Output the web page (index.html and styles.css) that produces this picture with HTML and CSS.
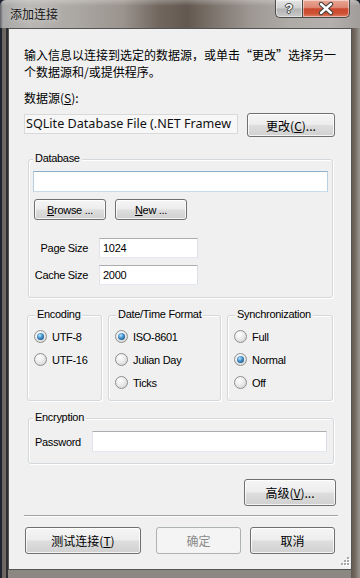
FILE: index.html
```html
<!DOCTYPE html>
<html>
<head>
<meta charset="utf-8">
<link rel="stylesheet" href="styles.css">
</head>
<body>
<div class="window">
  <div class="titlebar">
    <span class="title">添加连接</span>
    <div class="caption">
      <span class="cap-btn help">?</span>
      <span class="cap-btn close">
        <svg width="46" height="17" viewBox="0 0 46 17">
          <path d="M18 4 L28 13 M28 4 L18 13" stroke="#3b3b3b" stroke-width="4.4" stroke-linecap="round" fill="none"/>
          <path d="M18 4 L28 13 M28 4 L18 13" stroke="#ffffff" stroke-width="2.4" stroke-linecap="round" fill="none"/>
        </svg>
      </span>
    </div>
  </div>
  <div class="frame-body">
    <div class="client">
      <p class="intro">输入信息以连接到选定的数据源，或单击“更改”选择另一<br>个数据源和/或提供程序。</p>
      <div class="ds-label">数据源(<u>S</u>):</div>
      <div class="ds-row">
        <div class="ds-box">SQLite Database File (.NET Framework Data Provider for SQLite)</div>
        <button class="btn btn-change"><span>更改(<u>C</u>)...</span></button>
      </div>

      <div class="panel">
        <div class="group db-group">
          <span class="group-title">Database</span>
          <div class="text db-path"></div>
          <div class="btn-row">
            <button class="btn btn-sm btn-browse"><span><u>B</u>rowse ...</span></button>
            <button class="btn btn-sm btn-new"><span><u>N</u>ew ...</span></button>
          </div>
          <div class="field-row first">
            <span class="field-label">Page Size</span>
            <div class="text field-input">1024</div>
          </div>
          <div class="field-row">
            <span class="field-label">Cache Size</span>
            <div class="text field-input">2000</div>
          </div>
        </div>

        <div class="group-row">
          <div class="group radio-group">
            <span class="group-title">Encoding</span>
            <div class="radio-list">
              <div class="radio-item"><span class="radio on"></span>UTF-8</div>
              <div class="radio-item"><span class="radio"></span>UTF-16</div>
            </div>
          </div>
          <div class="group radio-group">
            <span class="group-title">Date/Time Format</span>
            <div class="radio-list">
              <div class="radio-item"><span class="radio on"></span>ISO-8601</div>
              <div class="radio-item"><span class="radio"></span>Julian Day</div>
              <div class="radio-item"><span class="radio"></span>Ticks</div>
            </div>
          </div>
          <div class="group radio-group">
            <span class="group-title">Synchronization</span>
            <div class="radio-list">
              <div class="radio-item"><span class="radio"></span>Full</div>
              <div class="radio-item"><span class="radio on"></span>Normal</div>
              <div class="radio-item"><span class="radio"></span>Off</div>
            </div>
          </div>
        </div>

        <div class="group enc-group">
          <span class="group-title">Encryption</span>
          <div class="pw-row">
            <span class="pw-label">Password</span>
            <div class="text pw-input"></div>
          </div>
        </div>
      </div>

      <div class="adv-row">
        <button class="btn btn-adv"><span>高级(<u>V</u>)...</span></button>
      </div>
      <div class="sep"></div>
      <div class="footer">
        <button class="btn btn-test"><span>测试连接(<u>T</u>)</span></button>
        <button class="btn btn-ok" disabled><span>确定</span></button>
        <button class="btn btn-cancel"><span>取消</span></button>
      </div>

      <svg class="grip" width="11" height="11" viewBox="0 0 11 11">
        <g fill="#ffffff">
          <rect x="9" y="1" width="2" height="2"/>
          <rect x="6" y="4" width="2" height="2"/><rect x="9" y="4" width="2" height="2"/>
          <rect x="3" y="7" width="2" height="2"/><rect x="6" y="7" width="2" height="2"/><rect x="9" y="7" width="2" height="2"/>
        </g>
        <g fill="#a9a9a9">
          <rect x="8" y="0" width="2" height="2"/>
          <rect x="5" y="3" width="2" height="2"/><rect x="8" y="3" width="2" height="2"/>
          <rect x="2" y="6" width="2" height="2"/><rect x="5" y="6" width="2" height="2"/><rect x="8" y="6" width="2" height="2"/>
        </g>
      </svg>
    </div>
  </div>
</div>
</body>
</html>
```
FILE: styles.css
```css
html, body {
  margin: 0;
  padding: 0;
}
body {
  width: 360px;
  height: 578px;
  overflow: hidden;
  background: #1e2531;
  font-family: "Noto Sans CJK SC", "Noto Sans", sans-serif;
}
.window {
  width: 360px;
  height: 578px;
  display: flex;
  flex-direction: column;
  background: linear-gradient(90deg,
    #1e2531 0, #1e2531 2px,
    #6a6460 2px, #716a65 6px,
    #2b2d31 6px, #2b2d31 8px,
    #8b8783 8px, #8b8783 351px,
    #5f564f 351px, #74695f 355px, #9a9793 360px);
  border-radius: 6px 6px 0 0;
  overflow: hidden;
}
.titlebar {
  position: relative;
  height: 28px;
  flex: none;
  display: flex;
  align-items: center;
  padding-left: 10px;
  font-size: 12px;
  color: #161616;
  background:
    linear-gradient(180deg, rgba(255,255,255,0.25) 0, rgba(255,255,255,0) 6px),
    linear-gradient(90deg,
      #5d6066 0, #a7a7a7 3px, #b9b7b4 8%, #aaa6a2 22%, #9b948e 34%,
      #71675f 44%, #62584f 52%, #7f766f 60%, #9f9994 70%,
      #aeaaa6 80%, #b4b0ad 92%, #a19d9a 100%);
}
.title {
  line-height: 28px;
  text-shadow: 0 0 6px rgba(255,255,255,0.6);
}
.caption {
  position: absolute;
  top: 0;
  right: 10px;
  display: flex;
}
.cap-btn {
  box-sizing: border-box;
  height: 18px;
  display: flex;
  align-items: center;
  justify-content: center;
  border: 1px solid #4b4b4b;
  border-top: none;
  box-shadow: inset 0 0 0 1px rgba(255,255,255,0.45);
}
.help {
  width: 27px;
  border-right: none;
  border-radius: 0 0 0 5px;
  background: linear-gradient(180deg, #e6e6e6 0%, #cfcfcf 48%, #b3b3b3 52%, #c9c9c9 100%);
  font: bold 13px "Liberation Sans", Arial, sans-serif;
  color: #ffffff;
  text-shadow: 0 0 1px #333, 0 0 1px #333, 1px 0 0 #555, -1px 0 0 #555, 0 1px 0 #555, 0 -1px 0 #555;
}
.close {
  width: 48px;
  border-radius: 0 0 5px 0;
  background: linear-gradient(180deg, #eaa896 0%, #dc8672 45%, #c9472d 52%, #cf5237 80%, #de8265 100%);
}
.frame-body {
  flex: 1;
  display: flex;
  padding: 0 9px 8px 8px;
}
.client {
  flex: 1;
  position: relative;
  border: 1px solid #545454;
  background: #f0f0f0;
  padding: 17px 15px 0 15px;
  display: flex;
  flex-direction: column;
  font-size: 12px;
  color: #000;
}
.intro {
  margin: 0;
  line-height: 17px;
  white-space: nowrap;
  font-family: "Noto Sans CJK SC", sans-serif;
}
.ds-label {
  margin-top: 9px;
  line-height: 17px;
}
.ds-row {
  margin-top: 7px;
  height: 24px;
  display: flex;
  align-items: flex-start;
}
.ds-box {
  box-sizing: border-box;
  width: 214px;
  height: 20px;
  margin-top: 1px;
  border: 1px solid #d9d9d9;
  background: #f7f7f7;
  font-family: "Noto Sans", sans-serif;
  font-size: 12.6px;
  line-height: 18px;
  padding-left: 1px;
  word-break: break-all;
  overflow: hidden;
  color: #111;
}
.btn {
  box-sizing: border-box;
  border: 1px solid #707070;
  border-radius: 3px;
  background: linear-gradient(180deg, #f6f6f6 0%, #ececec 48%, #dedede 52%, #d0d0d0 100%);
  box-shadow: inset 0 0 0 1px rgba(255,255,255,0.75);
  padding: 0;
  margin: 0;
  font-family: "Noto Sans CJK SC", "Noto Sans", sans-serif;
  font-size: 12px;
  color: #000;
  display: flex;
  align-items: center;
  justify-content: center;
  white-space: nowrap;
}
.btn-change {
  margin-left: 9px;
  width: 88px;
  height: 24px;
}
.panel {
  display: flex;
  flex-direction: column;
  font-family: "Liberation Sans", Arial, sans-serif;
  font-size: 11px;
  letter-spacing: -0.3px;
}
.group {
  border: 1px solid #d3d8dc;
  border-radius: 3px;
  box-shadow: inset 1px 1px 0 #ffffff, 1px 1px 0 #ffffff;
  display: flex;
  flex-direction: column;
}
.group-title {
  align-self: flex-start;
  margin-top: -9px;
  height: 15px;
  line-height: 15px;
  padding: 0 2px;
  background: #f0f0f0;
}
.db-group {
  margin: 22px 3px 0 4px;
  padding: 0 4px 12px 4px;
}
.text {
  box-sizing: border-box;
  border: 1px solid;
  border-color: #abadb3 #dbdfe6 #e3e9ef #e2e3ea;
  background: #ffffff;
}
.db-path {
  height: 21px;
  margin-top: 5px;
  border-color: #8fb0cb #b7cfe2 #c8dbea #b7cfe2;
}
.btn-row {
  display: flex;
  margin-top: 7px;
}
.btn-sm {
  width: 72px;
  height: 21px;
  font-family: "Liberation Sans", Arial, sans-serif;
  font-size: 11px;
  letter-spacing: -0.3px;
}
.btn-browse { margin-left: 1px; }
.btn-new { margin-left: 9px; }
.field-row {
  display: flex;
  align-items: center;
  margin-top: 7px;
}
.field-row.first { margin-top: 18px; }
.field-label {
  width: 55px;
  text-align: right;
  margin-right: 11px;
}
.field-input {
  width: 99px;
  height: 20px;
  line-height: 18px;
  padding-left: 3px;
}
.group-row {
  display: grid;
  grid-template-columns: 75px 113px 1fr;
  column-gap: 6px;
  margin: 17px 3px 0 3px;
  height: 86px;
}
.radio-group {
  padding-left: 6px;
}
.radio-group .group-title {
  margin-left: 1px;
}
.radio-list {
  margin-top: 3px;
}
.radio-item {
  height: 23px;
  display: flex;
  align-items: center;
}
.radio {
  flex: none;
  box-sizing: border-box;
  width: 13px;
  height: 13px;
  margin-right: 5px;
  border-radius: 50%;
  border: 1px solid #8e8f8f;
  background: radial-gradient(circle at 38% 32%, #ffffff 0%, #ebebeb 45%, #cdcdcd 100%);
  display: flex;
  align-items: center;
  justify-content: center;
}
.radio.on::after {
  content: "";
  width: 7px;
  height: 7px;
  border-radius: 50%;
  background: radial-gradient(circle at 40% 35%, #b5e6ff 0%, #3d8ac4 45%, #133c62 100%);
}
.enc-group {
  margin: 17px 2px 0 4px;
  padding: 0 6px 11px 6px;
}
.enc-group .group-title {
  margin-left: -2px;
}
.pw-row {
  display: flex;
  align-items: center;
  margin-top: 6px;
}
.pw-label {
  width: 57px;
  flex: none;
}
.pw-input {
  flex: 1;
  height: 21px;
}
.adv-row {
  display: flex;
  justify-content: flex-end;
  margin-top: 15px;
}
.btn-adv {
  width: 92px;
  height: 27px;
}
.sep {
  margin: 9px -2px 0 0;
  border-top: 1px solid #a0a0a0;
  border-bottom: 1px solid #ffffff;
}
.footer {
  display: flex;
  margin-top: 10px;
}
.footer .btn {
  height: 27px;
}
.btn-test {
  margin-left: 1px;
  width: 116px;
}
.btn-ok {
  margin-left: 15px;
  width: 85px;
  border-color: #adb2b5;
  background: #f4f4f4;
  box-shadow: none;
  color: #8a8a8a;
}
.btn-cancel {
  margin-left: 9px;
  width: 85px;
}
.grip {
  position: absolute;
  right: 1px;
  bottom: 1px;
}
```
